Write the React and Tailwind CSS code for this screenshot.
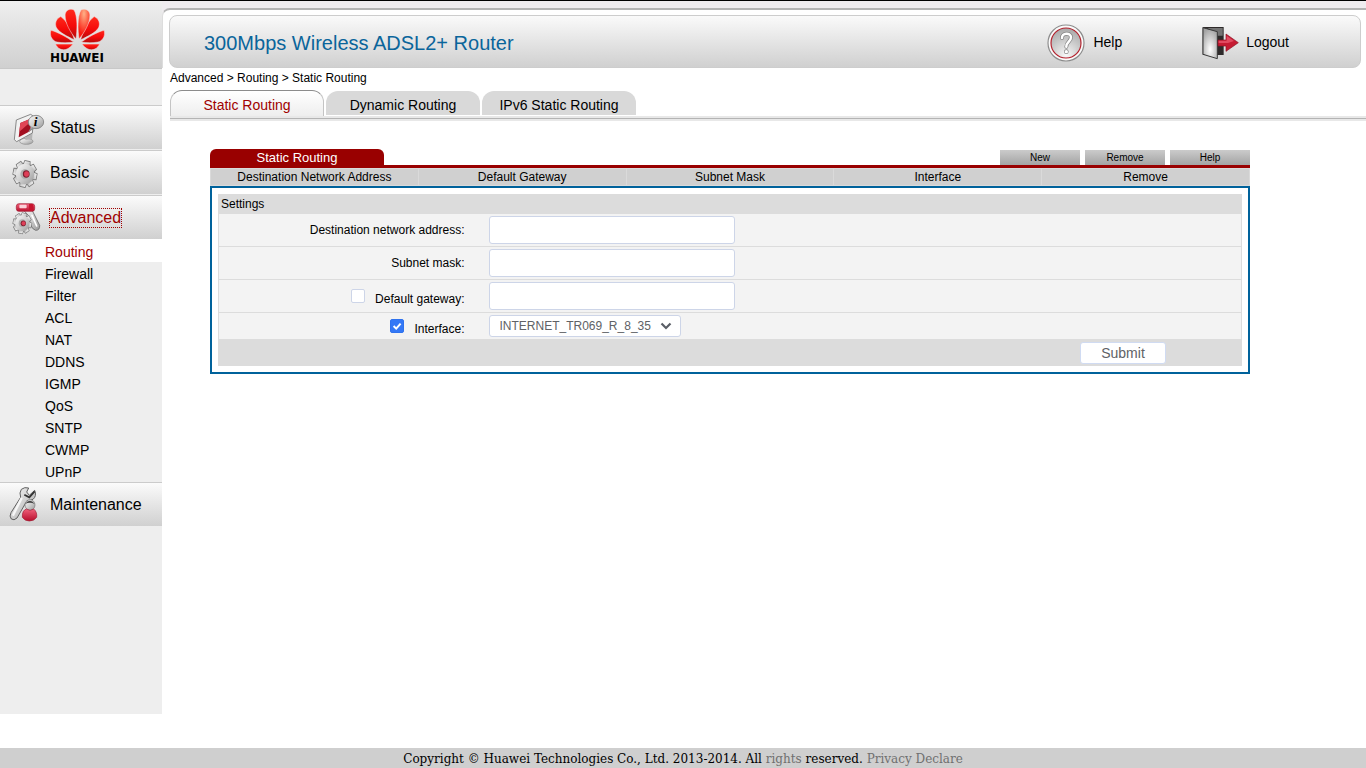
import React from "react";
import clsx from "clsx";

function Logo() {
  const half = (
    <>
      <path d="M94 100C116 84 142 70 163 64C168 82 158 97 144 100C128 103 110 102 94 100Z" />
      <path d="M92 93C99 68 114 36 133 23C148 29 152 45 146 57C137 72 113 83 92 93Z" />
      <path d="M96 106L149 106C144 120 128 127 114 121C106 117 101 112 96 106Z" />
    </>
  );
  const top = "M87 91C83 62 82 22 93 3C104 -3 119 3 120 18C120 44 104 70 87 91Z";
  return (
    <div className="flex flex-col items-center">
      <svg viewBox="0 0 165 124" className="h-[41px] w-[55px]" aria-hidden="true">
        <defs>
          <linearGradient id="petal" x1="0" y1="0" x2="0" y2="1">
            <stop offset="0" stopColor="#ff2a1c" />
            <stop offset="0.55" stopColor="#f50a0a" />
            <stop offset="1" stopColor="#b30d0d" />
          </linearGradient>
          <radialGradient id="petalGlow" cx="0.5" cy="0.15" r="0.7">
            <stop offset="0" stopColor="#ffb187" />
            <stop offset="1" stopColor="#fb1a10" />
          </radialGradient>
        </defs>
        <g fill="url(#petal)" stroke="#f4e4e4" strokeWidth="1.5">
          {half}
          <g transform="translate(165 0) scale(-1 1)">
            {half}
            <path d={top} />
          </g>
        </g>
        <path d={top} fill="url(#petalGlow)" stroke="#f4e4e4" strokeWidth="1.5" />
      </svg>
      <span className="font-['DejaVu_Sans',sans-serif] text-[12px] leading-4 font-bold text-black">HUAWEI</span>
    </div>
  );
}

function IconDefs() {
  return (
    <svg width="0" height="0" className="absolute" aria-hidden="true">
      <defs>
        <linearGradient id="steel" x1="0" y1="0" x2="1" y2="1">
          <stop offset="0" stopColor="#fafafa" />
          <stop offset="0.5" stopColor="#d0d0d0" />
          <stop offset="1" stopColor="#969696" />
        </linearGradient>
        <linearGradient id="ruby" x1="0" y1="0" x2="0" y2="1">
          <stop offset="0" stopColor="#f0607a" />
          <stop offset="1" stopColor="#b80e2c" />
        </linearGradient>
        <radialGradient id="disc" cx="0.5" cy="0.9" r="0.9">
          <stop offset="0" stopColor="#f8f8f8" />
          <stop offset="0.6" stopColor="#c6c6c6" />
          <stop offset="1" stopColor="#a8a8a8" />
        </radialGradient>
        <radialGradient id="door" cx="0.5" cy="0.7" r="0.7">
          <stop offset="0" stopColor="#ffffff" />
          <stop offset="1" stopColor="#a2a2a2" />
        </radialGradient>
      </defs>
    </svg>
  );
}

const TEETH = [12, 57, 102, 147, 192, 237, 282, 327];

function Gear({ cx, cy, r }) {
  const tooth = (a, grow) => (
    <path
      key={a}
      transform={`rotate(${a})`}
      d={grow ? "M-13 -24L-10 -40H10L13 -24Z" : "M-11 -22L-8 -37.5H8L11 -22Z"}
    />
  );
  return (
    <g transform={`translate(${cx} ${cy}) scale(${(r / 40) * 0.9} ${r / 40})`}>
      <g fill="#757575">
        {TEETH.map((a) => tooth(a, true))}
        <circle r="32" />
      </g>
      <g fill="url(#steel)">
        {TEETH.map((a) => tooth(a, false))}
        <circle r="30" />
      </g>
      <circle r="15" fill="#b0b0b0" />
      <circle cx="4" r="11" fill="#7c2030" />
      <circle cx="5" r="8" fill="#df3f58" />
    </g>
  );
}

function StatusIcon() {
  return (
    <svg viewBox="0 18 150 132" className="h-11 w-[50px] shrink-0" aria-hidden="true">
      <ellipse cx="79" cy="124" rx="20" ry="9" fill="url(#steel)" stroke="#888" strokeWidth="2" />
      <path d="M78 106L98 96L96 118L76 120Z" fill="#b5b5b5" />
      <path d="M49 60L92 43L102 50L97 99L50 125L43 119Z" fill="#f2f2f2" stroke="#747474" strokeWidth="2.5" />
      <path d="M61 69L95 55L91 93L56 112Z" fill="#a30f20" />
      <path d="M61 69L95 55L94 64L58 95Z" fill="#e04555" />
      <path d="M92 84L84 96L103 86Z" fill="#8d8d8d" />
      <ellipse cx="108" cy="66" rx="23" ry="20" fill="url(#steel)" stroke="#808080" strokeWidth="2.5" />
      <text x="107" y="79" textAnchor="middle" className="fill-black font-['Liberation_Serif',serif] text-[40px] font-bold italic">
        i
      </text>
    </svg>
  );
}

function BasicIcon() {
  return (
    <svg viewBox="0 153 150 132" className="h-11 w-[50px] shrink-0" aria-hidden="true">
      <Gear cx={75} cy={222} r={41} />
    </svg>
  );
}

function AdvancedIcon() {
  return (
    <svg viewBox="0 288 150 132" className="h-11 w-[50px] shrink-0" aria-hidden="true">
      <path d="M72 332Q86 322 98 334L119 376Q120 391 107 391Q97 388 92 375L84 345Z" fill="url(#steel)" stroke="#666" strokeWidth="2.5" />
      <path d="M96 346L110 378" stroke="#fff" strokeWidth="5" strokeLinecap="round" />
      <rect x="49" y="311" width="55" height="23" rx="8" fill="url(#ruby)" stroke="#a01a30" strokeWidth="2" />
      <rect x="58" y="314" width="22" height="11" rx="3" fill="#fbd0d8" />
      <path d="M87 312H98Q104 322 98 333H87Z" fill="#c7152f" />
      <Gear cx={67} cy={370} r={32} />
    </svg>
  );
}

function MaintenanceIcon() {
  return (
    <svg viewBox="0 69 150 132" className="h-11 w-[50px] shrink-0" aria-hidden="true">
      <path
        d="M64 88Q74 80 86 84L80 96L88 106L104 91Q111 108 99 118Q88 124 81 122L51 174Q42 183 34 177Q27 169 33 158L62 112Q57 98 64 88Z"
        fill="url(#steel)"
        stroke="#606060"
        strokeWidth="3"
      />
      <path d="M64 116L40 164" stroke="#f7f7f7" strokeWidth="7" strokeLinecap="round" />
      <path d="M73 104L88 112L104 94" fill="none" stroke="#333" strokeWidth="5" />
      <ellipse cx="90" cy="135" rx="15" ry="16" fill="url(#steel)" stroke="#777" strokeWidth="2" />
      <path d="M75 132Q90 112 104 132Q90 125 75 132Z" fill="#444" />
      <path d="M67 172Q66 150 80 147Q90 155 101 147Q112 156 110 172Q103 183 88 183Q74 183 67 172Z" fill="url(#ruby)" stroke="#a01a30" strokeWidth="2" />
    </svg>
  );
}

function HelpIcon() {
  return (
    <svg viewBox="48 71 114 114" className="size-[38px]" aria-hidden="true">
      <circle cx="105" cy="128" r="54" fill="#fafafa" stroke="#8c8c8c" strokeWidth="3.5" />
      <circle cx="105" cy="128" r="45" fill="url(#disc)" stroke="#b3202c" strokeWidth="3.5" />
      <g fill="none" strokeLinecap="round">
        <path d="M93 113C91 97 120 95 120 111C120 124 106 124 106 139" stroke="#868686" strokeWidth="12" />
        <circle cx="106" cy="154" r="7" fill="#868686" />
        <path d="M93 113C91 97 120 95 120 111C120 124 106 124 106 139" stroke="#fff" strokeWidth="7.5" />
        <circle cx="106" cy="154" r="5" fill="#fff" />
      </g>
    </svg>
  );
}

function LogoutIcon() {
  return (
    <svg viewBox="514 75 111 102" className="h-[34px] w-[37px]" aria-hidden="true">
      <path d="M516 78H579V162H516Z" fill="#2e2a2a" />
      <path d="M530 81H576V104H560Z" fill="#747474" />
      <path d="M517 80L560 92V173L517 160Z" fill="url(#door)" stroke="#3a3a3a" strokeWidth="3" />
      <path d="M562 117H586V99L623 125L586 151V135H562Z" fill="#c51b33" stroke="#8f1022" strokeWidth="2" />
      <path d="M564 119H588V104L610 120L592 126H564Z" fill="#e14a60" />
    </svg>
  );
}

const SUBMENU = ["Routing", "Firewall", "Filter", "ACL", "NAT", "DDNS", "IGMP", "QoS", "SNTP", "CWMP", "UPnP"];

function NavItem({ icon, label, active }) {
  return (
    <a
      href="#"
      className="flex h-11 items-center border-t border-[#cbcbcb] bg-linear-to-b from-[#fbfbfb] to-[#d0d0d0] text-[16px]"
    >
      {icon}
      <span className={clsx("leading-[18px]", active ? "text-[#a00000] outline-1 outline-dotted outline-[#a00000]" : "text-black")}>
        {label}
      </span>
    </a>
  );
}

function Sidebar() {
  return (
    <aside className="mb-[34px] flex w-[162px] shrink-0 flex-col bg-[#eeeeee]">
      <div className="flex h-[68px] justify-center border-b border-[#c8c8c8] bg-linear-to-b from-[#efefef] to-[#d0d0d0] pt-2 pr-2">
        <Logo />
      </div>
      <nav className="mt-9 flex flex-col">
        <div className="flex flex-col gap-px">
          <NavItem icon={<StatusIcon />} label="Status" />
          <NavItem icon={<BasicIcon />} label="Basic" />
          <NavItem icon={<AdvancedIcon />} label="Advanced" active />
        </div>
        <ul>
          {SUBMENU.map((item, i) => (
            <li key={item}>
              <a
                href="#"
                className={clsx(
                  "block pl-[45px] text-[14px] leading-[22px]",
                  i === 0 ? "h-[23px] bg-white pt-0.5 text-[#a00000]" : "h-[22px] pt-px text-black",
                )}
              >
                {item}
              </a>
            </li>
          ))}
        </ul>
        <NavItem icon={<MaintenanceIcon />} label="Maintenance" />
      </nav>
    </aside>
  );
}

function Header() {
  return (
    <div className="bg-[#efecef] pt-[7px]">
      <header className="rounded-tl-lg border-t-2 border-l border-t-[#b4b4b4] border-l-[#dddddd] bg-white pt-[5px] pr-[5px] pl-1.5">
        <div className="flex h-[53px] items-center rounded-lg border border-[#cdcdcd] bg-linear-to-b from-[#fafafa] to-[#d0d0d0] pt-0.5 pr-[71px] pl-[34px]">
          <h1 className="grow text-[20px] leading-6 text-[#0a659b]">300Mbps Wireless ADSL2+ Router</h1>
          <a href="#" className="flex items-center gap-2 text-[14px]">
            <HelpIcon />
            Help
          </a>
          <a href="#" className="ml-20 flex items-center gap-[7px] text-[14px]">
            <LogoutIcon />
            Logout
          </a>
        </div>
      </header>
    </div>
  );
}

function Tabs() {
  return (
    <nav className="ml-2">
      <div className="flex items-end gap-0.5">
        <a
          href="#"
          className="h-[26px] w-[154px] rounded-t-xl border-x border-t border-x-[#c4c4c4] border-t-[#8c8c8c] bg-linear-to-b from-white to-[#eeeeee] pt-px text-center text-[14px] leading-[26px] text-[#a00000]"
        >
          Static Routing
        </a>
        {["Dynamic Routing", "IPv6 Static Routing"].map((t) => (
          <a key={t} href="#" className="mb-px h-6 w-[154px] rounded-t-xl bg-[#d9d9d9] pt-px text-center text-[14px] leading-[26px] text-black">
            {t}
          </a>
        ))}
      </div>
      <div className="h-[5px] bg-[#e8e8e8]">
        <div className="h-[3px] border-b border-[#b4b4b4]" />
      </div>
    </nav>
  );
}

function Row({ id, label, last, check, children }) {
  return (
    <div className={clsx("flex items-center border-x border-[#dcdcdc] bg-[#f3f3f3]", last ? "h-[26px]" : "h-[33px] border-b")}>
      <div className={clsx("flex w-1/4 items-baseline justify-end gap-2.5 pr-2.5", check && "pt-1")}>
        {check}
        <label htmlFor={id}>{label}</label>
      </div>
      <div className="grow pl-3.5">{children}</div>
    </div>
  );
}

function Check({ label, checked }) {
  return (
    <span className="grid">
      <input
        type="checkbox"
        aria-label={label}
        defaultChecked={checked}
        className="peer col-start-1 row-start-1 mb-px size-3.5 appearance-none rounded-[2px] border border-[#cdd5e8] bg-white checked:border-[#2f72ee] checked:bg-[#3478f6]"
      />
      <svg viewBox="0 0 14 14" className="pointer-events-none invisible col-start-1 row-start-1 size-3.5 peer-checked:visible" aria-hidden="true">
        <path d="M3.6 7L6.2 9.6L10.6 4.6" fill="none" stroke="#fff" strokeWidth="2" />
      </svg>
    </span>
  );
}

const FIELD = "block h-7 w-[246px] rounded-[3px] border border-[#cdd5e8] bg-white px-2.5 text-[12px] text-[#606a78]";
const COLUMNS = ["Destination Network Address", "Default Gateway", "Subnet Mask", "Interface", "Remove"];

function RoutingPanel() {
  return (
    <section className="mt-7 mr-[116px] ml-12 text-[12px] leading-4">
      <div className="flex items-end border-b-[3px] border-[#990000]">
        <h2 className="h-4 w-[174px] rounded-t-md bg-[#990000] text-center text-[13px] leading-[18px] text-white">Static Routing</h2>
        <div className="flex grow justify-end gap-[5px]">
          {["New", "Remove", "Help"].map((b) => (
            <button key={b} type="button" className="h-[15px] w-20 bg-linear-to-b from-[#cbcbcb] to-[#a4a4a4] text-[10px] leading-[15px] text-black">
              {b}
            </button>
          ))}
        </div>
      </div>
      <table className="w-full table-fixed border-separate border-spacing-0 border-r border-[#dadada] bg-[#d0d0d0]">
        <thead>
          <tr>
            {COLUMNS.map((c) => (
              <th key={c} scope="col" className="h-[18px] border-y border-l border-[#dadada] p-0 text-center leading-4 font-normal">
                {c}
              </th>
            ))}
          </tr>
        </thead>
      </table>
      <form className="border-2 border-[#00629b] bg-white p-1.5" onSubmit={(e) => e.preventDefault()}>
        <h3 className="h-5 bg-[#dcdcdc] pl-[3px] leading-5">Settings</h3>
        <Row id="dest" label="Destination network address:">
          <input id="dest" type="text" className={FIELD} />
        </Row>
        <Row id="mask" label="Subnet mask:">
          <input id="mask" type="text" className={FIELD} />
        </Row>
        <Row id="gateway" label="Default gateway:" check={<Check label="Use default gateway" />}>
          <input id="gateway" type="text" className={FIELD} />
        </Row>
        <Row id="iface" label="Interface:" last check={<Check label="Use interface" checked />}>
          <span className="inline-grid items-center align-top">
            <select
              id="iface"
              className="col-start-1 row-start-1 h-[22px] w-48 appearance-none rounded-[3px] border border-[#cdd5e8] bg-white pr-6 pl-2.5 text-[12px] leading-4 text-[#606266]"
            >
              <option>INTERNET_TR069_R_8_35</option>
            </select>
            <svg viewBox="0 0 12 8" className="pointer-events-none col-start-1 row-start-1 mr-[9px] h-2 w-3 justify-self-end" aria-hidden="true">
              <path d="M1.5 1.5L6 6L10.5 1.5" fill="none" stroke="#5a5e66" strokeWidth="2.2" />
            </svg>
          </span>
        </Row>
        <div className="flex h-[27px] items-center justify-end bg-[#dcdcdc] pr-[76px]">
          <button type="submit" className="h-[22px] w-[86px] rounded-[3px] border border-[#d0dbf2] bg-white text-[14px] leading-5 text-[#606266]">
            Submit
          </button>
        </div>
      </form>
    </section>
  );
}

export default function App() {
  return (
    <div className="flex min-h-screen flex-col border-t border-black bg-white font-['Liberation_Sans',Arial,sans-serif] text-black">
      <IconDefs />
      <div className="flex grow">
        <Sidebar />
        <main className="min-w-0 grow">
          <Header />
          <p className="mb-1 ml-2 pt-0.5 text-[12px] leading-4">Advanced &gt; Routing &gt; Static Routing</p>
          <Tabs />
          <RoutingPanel />
        </main>
      </div>
      <footer className="h-5 bg-[#cfcfcf] pt-px text-center font-['DejaVu_Serif',serif] text-[12px] leading-5">
        Copyright © Huawei Technologies Co., Ltd. 2013-2014. All{" "}
        <a href="#" className="text-[#707070]">rights</a> reserved.{" "}
        <a href="#" className="text-[#707070]">Privacy Declare</a>
      </footer>
    </div>
  );
}
